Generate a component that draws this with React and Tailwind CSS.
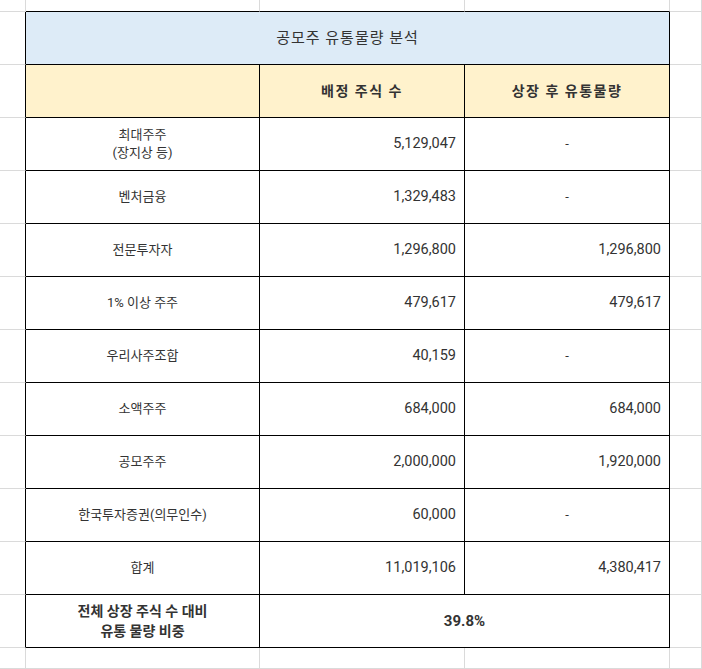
import React from 'react';

const rows = [
  { label: ['최대주주', '(장지상 등)'], alloc: '5,129,047', float: '-' },
  { label: ['벤처금융'], alloc: '1,329,483', float: '-' },
  { label: ['전문투자자'], alloc: '1,296,800', float: '1,296,800' },
  { label: ['1% 이상 주주'], alloc: '479,617', float: '479,617' },
  { label: ['우리사주조합'], alloc: '40,159', float: '-' },
  { label: ['소액주주'], alloc: '684,000', float: '684,000' },
  { label: ['공모주주'], alloc: '2,000,000', float: '1,920,000' },
  { label: ['한국투자증권(의무인수)'], alloc: '60,000', float: '-' },
  { label: ['합계'], alloc: '11,019,106', float: '4,380,417' },
];

const font = { fontFamily: '"Roboto", "Noto Sans CJK KR", sans-serif' };

// 스프레드시트 바깥 칸 (회색 눈금선)
const Blank = ({ edgeR, edgeB }) => (
  <div
    className={`border-r border-b ${edgeR ? 'border-r-black' : 'border-r-[#dadada]'} ${
      edgeB ? 'border-b-black' : 'border-b-[#dadada]'
    }`}
  />
);

const Cell = ({ className = '', children }) => (
  <div className={`border-r border-b border-black flex items-center text-[13px] text-[#333] ${className}`}>
    {children}
  </div>
);

export default function App() {
  return (
    <div
      className="w-[702px] h-[669px] overflow-hidden bg-white grid grid-cols-[26px_234px_205px_205px_1fr] grid-rows-[12px_repeat(12,53px)_1fr]"
      style={font}
    >
      {/* 윗줄 */}
      <Blank />
      <Blank edgeB />
      <Blank edgeB />
      <Blank edgeB />
      <Blank />

      {/* 제목 */}
      <Blank edgeR />
      <Cell className="col-span-3 justify-center bg-[#ddebf7] text-[15px] text-[#222] tracking-[1px]">
        공모주 유통물량 분석
      </Cell>
      <Blank />

      {/* 헤더 */}
      <Blank edgeR />
      <Cell className="bg-[#fff2cc]" />
      <Cell className="justify-center bg-[#fff2cc] text-[14px] font-bold text-[#222] tracking-[1.5px]">
        배정 주식 수
      </Cell>
      <Cell className="justify-center bg-[#fff2cc] text-[14px] font-bold text-[#222] tracking-[1.5px]">
        상장 후 유통물량
      </Cell>
      <Blank />

      {rows.map((r) => (
        <React.Fragment key={r.label[0]}>
          <Blank edgeR />
          <Cell className="flex-col justify-center text-center leading-[18px]">
            {r.label.map((l) => (
              <span key={l}>{l}</span>
            ))}
          </Cell>
          <Cell className="justify-end pr-2 text-[14.5px]">{r.alloc}</Cell>
          <Cell className={r.float === '-' ? 'justify-center' : 'justify-end pr-2 text-[14.5px]'}>{r.float}</Cell>
          <Blank />
        </React.Fragment>
      ))}

      {/* 비중 */}
      <Blank edgeR />
      <Cell className="flex-col justify-center text-center font-bold text-[14px] text-[#222] leading-[20px]">
        <span>전체 상장 주식 수 대비</span>
        <span>유통 물량 비중</span>
      </Cell>
      <Cell className="col-span-2 justify-center font-bold text-[15px] text-[#222]">39.8%</Cell>
      <Blank />

      {/* 아랫줄 */}
      <Blank />
      <Blank />
      <Blank />
      <Blank />
      <Blank />
    </div>
  );
}
